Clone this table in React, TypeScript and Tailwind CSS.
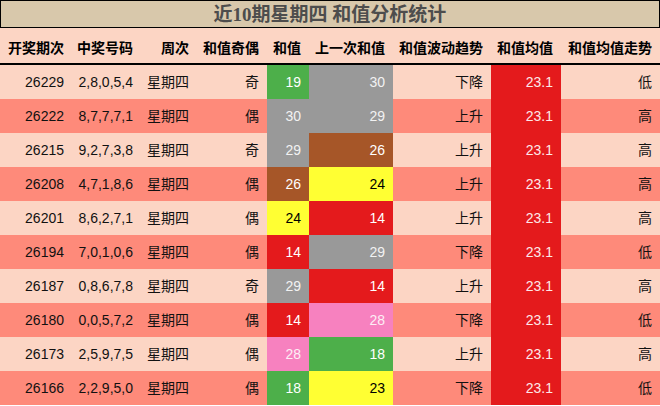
import React from "react";

type Row = {
  id: string;
  nums: string;
  parity: string;
  sum: number;
  prev: number;
  trend: string;
  avgTrend: string;
};

const rows: Row[] = [
  { id: "26229", nums: "2,8,0,5,4", parity: "奇", sum: 19, prev: 30, trend: "下降", avgTrend: "低" },
  { id: "26222", nums: "8,7,7,7,1", parity: "偶", sum: 30, prev: 29, trend: "上升", avgTrend: "高" },
  { id: "26215", nums: "9,2,7,3,8", parity: "奇", sum: 29, prev: 26, trend: "上升", avgTrend: "高" },
  { id: "26208", nums: "4,7,1,8,6", parity: "偶", sum: 26, prev: 24, trend: "上升", avgTrend: "高" },
  { id: "26201", nums: "8,6,2,7,1", parity: "偶", sum: 24, prev: 14, trend: "上升", avgTrend: "高" },
  { id: "26194", nums: "7,0,1,0,6", parity: "偶", sum: 14, prev: 29, trend: "下降", avgTrend: "低" },
  { id: "26187", nums: "0,8,6,7,8", parity: "奇", sum: 29, prev: 14, trend: "上升", avgTrend: "高" },
  { id: "26180", nums: "0,0,5,7,2", parity: "偶", sum: 14, prev: 28, trend: "下降", avgTrend: "低" },
  { id: "26173", nums: "2,5,9,7,5", parity: "偶", sum: 28, prev: 18, trend: "上升", avgTrend: "高" },
  { id: "26166", nums: "2,2,9,5,0", parity: "偶", sum: 18, prev: 23, trend: "下降", avgTrend: "低" },
];

function colorFor(v: number): string {
  if (v === 19 || v === 18) return "bg-[#4daf4a] text-white";
  if (v === 30 || v === 29) return "bg-[#999999] text-[#f2f2f2]";
  if (v === 26) return "bg-[#a65628] text-white";
  if (v === 24 || v === 23) return "bg-[#ffff33] text-black";
  if (v === 14) return "bg-[#e41a1c] text-white";
  if (v === 28) return "bg-[#f781bf] text-[#fdeef5]";
  return "";
}

const headers = ["开奖期次", "中奖号码", "周次", "和值奇偶", "和值", "上一次和值", "和值波动趋势", "和值均值", "和值均值走势"];

const grid = "grid grid-cols-[72px_69px_56px_70px_42px_84px_98px_70px_99px]";
const cell = "flex items-center justify-end pr-2 h-[34px]";

export default function App() {
  return (
    <div
      className="w-[660px] h-[406px] overflow-hidden bg-white text-[14px] text-[#111]"
      style={{ fontFamily: '"Liberation Sans", "Noto Sans CJK SC", sans-serif' }}
    >
      <div
        className="h-[28px] border border-black bg-[#d8c8ab] flex items-center justify-center text-[19px] font-bold text-[#4d4d4d] pt-[2px]"
        style={{ fontFamily: '"Liberation Serif", "Noto Sans CJK SC", serif' }}
      >
        近10期星期四 和值分析统计
      </div>
      <div className={`${grid} h-[37px] bg-[#fcd5c4] border-b-2 border-black`}>
        {headers.map((h) => (
          <div key={h} className="flex items-center justify-end pr-2 pt-[5px] font-bold text-black">
            {h}
          </div>
        ))}
      </div>
      {rows.map((r, i) => (
        <div key={r.id} className={`${grid} ${i % 2 === 0 ? "bg-[#fcd5c4]" : "bg-[#fe8a7a]"}`}>
          <div className={cell}>{r.id}</div>
          <div className={cell}>{r.nums}</div>
          <div className={cell}>星期四</div>
          <div className={cell}>{r.parity}</div>
          <div className={`${cell} ${colorFor(r.sum)}`}>{r.sum}</div>
          <div className={`${cell} ${colorFor(r.prev)}`}>{r.prev}</div>
          <div className={cell}>{r.trend}</div>
          <div className={`${cell} bg-[#e41a1c] text-[#fde8e8]`}>23.1</div>
          <div className={cell}>{r.avgTrend}</div>
        </div>
      ))}
    </div>
  );
}
